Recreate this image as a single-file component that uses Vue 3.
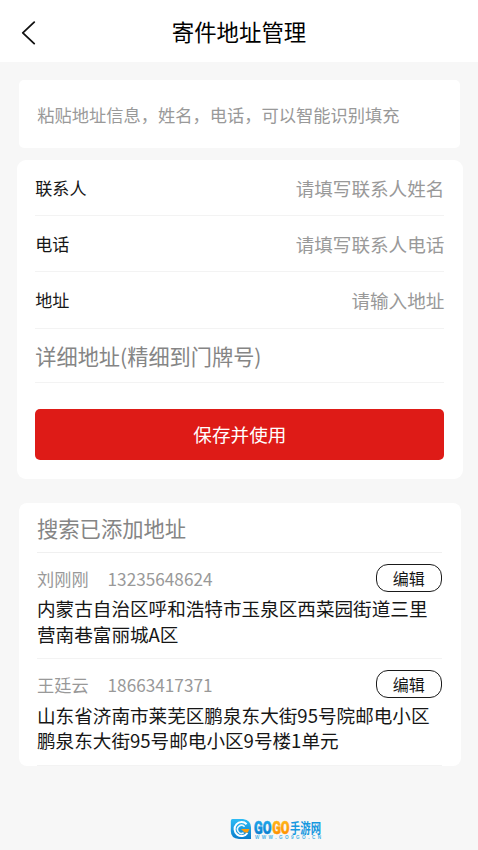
<script setup>
const fields = [
  { label: '联系人', hint: '请填写联系人姓名' },
  { label: '电话', hint: '请填写联系人电话' },
  { label: '地址', hint: '请输入地址' },
]
const addresses = [
  {
    name: '刘刚刚',
    phone: '13235648624',
    lines: ['内蒙古自治区呼和浩特市玉泉区西菜园街道三里', '营南巷富丽城A区'],
  },
  {
    name: '王廷云',
    phone: '18663417371',
    lines: ['山东省济南市莱芜区鹏泉东大街95号院邮电小区', '鹏泉东大街95号邮电小区9号楼1单元'],
  },
]
</script>

<template>
  <div class="page">
    <header class="header">
      <svg class="back" viewBox="0 0 16 24" width="16" height="24">
        <path d="M13.2 1.2 L1.8 11.8 L13.2 22.6" fill="none" stroke="#111" stroke-width="1.8" stroke-linecap="round" stroke-linejoin="round" />
      </svg>
      <h1 class="title">寄件地址管理</h1>
    </header>

    <section class="paste">粘贴地址信息，姓名，电话，可以智能识别填充</section>

    <section class="form">
      <div v-for="f in fields" :key="f.label" class="field">
        <span class="label">{{ f.label }}</span>
        <span class="hint">{{ f.hint }}</span>
      </div>
      <div class="detail">详细地址(精细到门牌号)</div>
      <button class="save">保存并使用</button>
    </section>

    <section class="list">
      <div class="search">搜索已添加地址</div>
      <article v-for="a in addresses" :key="a.phone" class="item">
        <div class="person">
          <span class="name">{{ a.name }}</span>
          <span class="phone">{{ a.phone }}</span>
          <button class="edit">编辑</button>
        </div>
        <p class="address">
          <span v-for="l in a.lines" :key="l" class="line">{{ l }}</span>
        </p>
      </article>
    </section>

    <footer class="brand">
      <svg viewBox="0 -6 96 34" width="96" height="34">
        <defs>
          <linearGradient id="blue" x1="0" y1="0" x2="0" y2="1">
            <stop offset="0" stop-color="#2dbcf5" />
            <stop offset="1" stop-color="#0a7dcb" />
          </linearGradient>
          <linearGradient id="blueText" gradientUnits="userSpaceOnUse" x1="0" y1="2" x2="0" y2="16">
            <stop offset="0" stop-color="#1fa9ec" />
            <stop offset="1" stop-color="#0b7fd0" />
          </linearGradient>
          <linearGradient id="orange" gradientUnits="userSpaceOnUse" x1="0" y1="2" x2="0" y2="16">
            <stop offset="0" stop-color="#ffb81c" />
            <stop offset="1" stop-color="#ff9200" />
          </linearGradient>
        </defs>
        <path d="M2.5 1 H13 Q21 2 21 9.5 V21 H9 Q.8 20.5 .8 13 V3 Q.8 1 2.5 1Z" fill="url(#blue)" />
        <path d="M16.6 6.2 A7 7 0 1 0 17.4 15" fill="none" stroke="#fff" stroke-width="2" />
        <path d="M14.6 8.8 A4 4 0 1 0 13.6 14.8" fill="none" stroke="#e8f8ff" stroke-width="1.6" />
        <path d="M11 11 H19.5 L17.8 14.6 H14.5Z" fill="#ff9c0c" />
        <g class="gogo">
          <text x="24" y="15.5" textLength="17.4" lengthAdjust="spacingAndGlyphs" fill="url(#blueText)" stroke="url(#blueText)">GO</text>
          <text x="42.2" y="15.5" textLength="17.4" lengthAdjust="spacingAndGlyphs" fill="url(#orange)" stroke="url(#orange)">GO</text>
        </g>
        <text class="cn" x="60" y="14.9" textLength="31" lengthAdjust="spacingAndGlyphs">手游网</text>
        <text class="url" x="25" y="21.2" textLength="66">WWW.GO9GO.CN</text>
      </svg>
    </footer>
  </div>
</template>

<style>
body {
  margin: 0;
  background: #f7f7f7;
}
</style>

<style scoped>
.page {
  box-sizing: border-box;
  height: 850px;
  overflow: hidden;
  background: #f7f7f7;
  color: #161616;
  font-family: "Noto Sans CJK SC", sans-serif;
  display: flex;
  flex-direction: column;
}
.header {
  display: grid;
  grid-template-columns: 60px 1fr 60px;
  align-items: center;
  height: 61.5px;
  flex: none;
  background: #fff;
}
.back {
  margin: 3.5px 0 0 20.6px;
}
.title {
  margin: 0;
  text-align: center;
  font-size: 22.4px;
  line-height: 32px;
  font-weight: 400;
  color: #000;
}
.paste {
  flex: none;
  box-sizing: border-box;
  height: 68px;
  margin: 18.5px 18px 0 19px;
  padding-left: 18.2px;
  border-radius: 5px;
  background: #fff;
  color: #999;
  font-size: 17.25px;
  line-height: 69px;
}
.form {
  flex: none;
  box-sizing: border-box;
  height: 318.5px;
  margin: 12px 15px 0 16.6px;
  padding: 0 18.6px 0 18.7px;
  border-radius: 9px;
  background: #fff;
}
.field {
  box-sizing: border-box;
  height: 56.2px;
  display: flex;
  align-items: center;
  justify-content: space-between;
  border-bottom: 1.5px solid #f3f3f3;
}
.label {
  font-size: 17.1px;
}
.hint {
  color: #999;
  font-size: 18.6px;
}
.detail {
  box-sizing: border-box;
  height: 54.8px;
  border-bottom: 1.5px solid #f3f3f3;
  color: #858585;
  font-size: 21.2px;
  line-height: 53.4px;
}
.save {
  display: block;
  width: 100%;
  height: 51px;
  margin-top: 25.6px;
  padding: 0 0 2px;
  border: 0;
  border-radius: 5px;
  background: #de1b17;
  color: #fff;
  font: inherit;
  font-size: 18.6px;
}
.list {
  flex: none;
  box-sizing: border-box;
  height: 263.5px;
  margin: 24px 17.5px 0 18.5px;
  padding: 0 18.5px;
  border-radius: 8px;
  background: #fff;
}
.search {
  box-sizing: border-box;
  height: 50.5px;
  border-bottom: 1.5px solid #f0f0f0;
  color: #858585;
  font-size: 21.3px;
  line-height: 50px;
}
.item {
  box-sizing: border-box;
  height: 106.3px;
  padding-top: 11px;
  border-bottom: 1.5px solid #f3f3f3;
}
.person {
  display: flex;
  align-items: center;
  height: 28px;
  color: #999;
  font-size: 17.2px;
}
.phone {
  margin-left: 19px;
}
.edit {
  box-sizing: border-box;
  width: 66.5px;
  height: 28px;
  margin-left: auto;
  padding: 0;
  border: 1.4px solid #1a1a1a;
  border-radius: 12px;
  background: #fff;
  color: #161616;
  font: inherit;
  font-size: 16px;
  line-height: 24px;
}
.address {
  margin: 3.4px 0 0;
  font-size: 18.6px;
  line-height: 25.3px;
}
.line {
  display: block;
  white-space: nowrap;
}
.brand {
  margin: 46px 0 0 230px;
  height: 34px;
}
.brand svg {
  display: block;
  overflow: visible;
}
.gogo {
  font: 900 18.5px Roboto, sans-serif;
  stroke-width: 0.6px;
}
.cn {
  font: 700 13.5px "Noto Sans CJK SC", sans-serif;
  fill: #1598df;
}
.url {
  font: 700 4.6px "Liberation Sans", sans-serif;
  fill: #49b3e8;
}
</style>
